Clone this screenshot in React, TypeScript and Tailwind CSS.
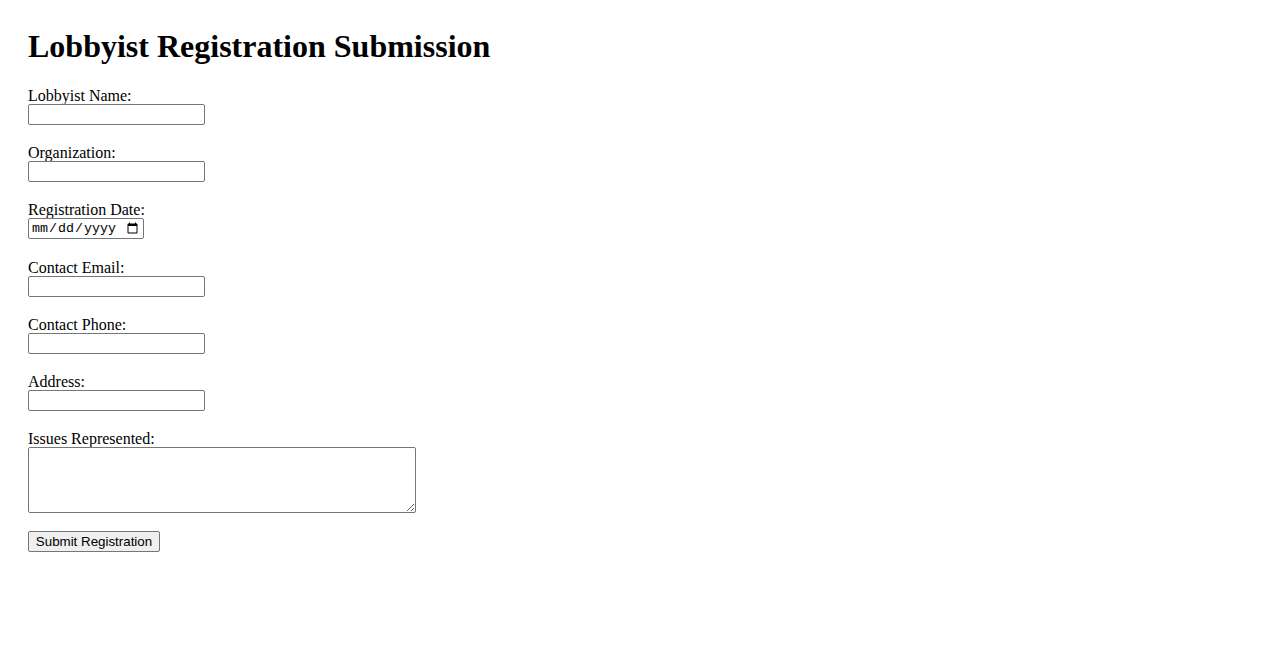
export default function App() {
  const fields = [
    { id: 'name', label: 'Lobbyist Name:', type: 'text' },
    { id: 'org', label: 'Organization:', type: 'text' },
    { id: 'date', label: 'Registration Date:', type: 'date' },
    { id: 'email', label: 'Contact Email:', type: 'email' },
    { id: 'phone', label: 'Contact Phone:', type: 'tel' },
    { id: 'address', label: 'Address:', type: 'text' },
  ]

  return (
    <div className="min-h-screen bg-white p-7 font-['Liberation_Serif','Times_New_Roman',serif] text-black">
      <h1 className="mb-[21px] text-[32px] font-bold leading-[37px]">
        Lobbyist Registration Submission
      </h1>

      <form className="flex flex-col items-start gap-[18.2px]" onSubmit={(e) => e.preventDefault()}>
        {fields.map((f) => (
          <div key={f.id} className="flex flex-col items-start">
            <label htmlFor={f.id} className="pt-[1px] text-[16px] leading-[17px]">
              {f.label}
            </label>
            {f.type === 'date' ? (
              <input
                id={f.id}
                type="date"
                className="h-[21px] w-[116px] rounded-[2px] border border-[#767676] bg-white px-[2px] font-['Liberation_Mono',monospace] text-[13.33px]"
              />
            ) : (
              <input
                id={f.id}
                type={f.type}
                className="h-[21px] w-[177px] rounded-[2px] border border-[#767676] bg-white px-[2px] font-['Liberation_Sans',Arial,sans-serif] text-[13.33px]"
              />
            )}
          </div>
        ))}

        <div className="flex flex-col items-start">
          <label htmlFor="issues" className="pt-[1px] text-[16px] leading-[17px]">
            Issues Represented:
          </label>
          <textarea
            id="issues"
            className="h-[66px] w-[388px] rounded-[2px] border border-[#767676] bg-white px-[2px] font-['Liberation_Mono',monospace] text-[13.33px]"
          />
        </div>

        <button
          type="submit"
          className="block h-[21px] w-[132px] rounded-[2px] border border-[#767676] bg-[#efefef] px-[6px] font-['Liberation_Sans',Arial,sans-serif] text-[13.33px] leading-[17px] text-black"
        >
          Submit Registration
        </button>
      </form>
    </div>
  )
}
